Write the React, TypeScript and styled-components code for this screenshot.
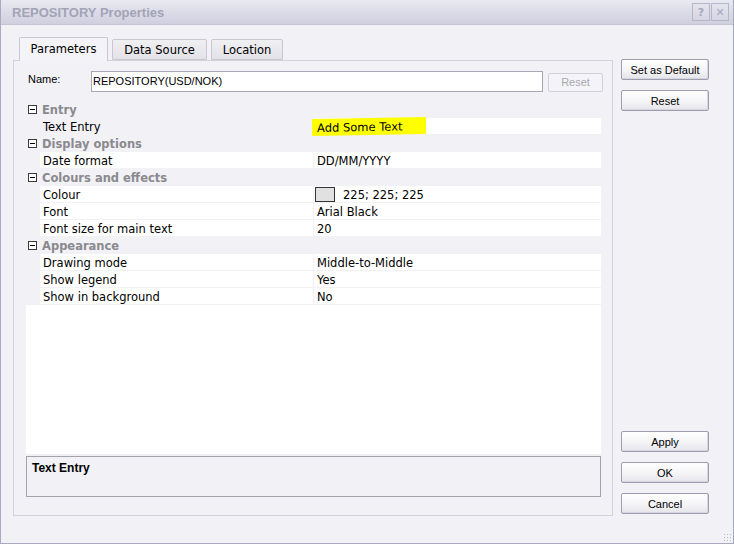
import React from "react";
import styled, { createGlobalStyle } from "styled-components";

const Global = createGlobalStyle`
  html, body { margin: 0; padding: 0; background: #f1f1f6; }
  * { box-sizing: border-box; }
`;

const Window = styled.div`
  width: 734px;
  height: 544px;
  border: 1px solid #a9a9c0;
  border-top: none;
  background: #f1f1f6;
  display: flex;
  flex-direction: column;
  position: relative;
  overflow: hidden;
`;

const TitleBar = styled.div`
  height: 25px;
  display: flex;
  align-items: center;
  padding: 0 4px 0 11px;
  background: linear-gradient(#e9e9f2, #cfcfdf);
  border-bottom: 1px solid #c4c4d4;
`;

const Title = styled.div`
  flex: 1;
  font-family: "Liberation Sans", Arial, sans-serif;
  font-weight: bold;
  font-size: 13px;
  color: #a3a3b6;
`;

const CaptionButton = styled.div`
  width: 18px;
  height: 18px;
  margin-left: 1px;
  border: 1px solid #b6b6c8;
  background: linear-gradient(#e4e4ee, #d6d6e4);
  color: #a6a6ba;
  font-family: "DejaVu Sans", sans-serif;
  font-weight: bold;
  font-size: 11px;
  display: flex;
  align-items: center;
  justify-content: center;
`;

const Body = styled.div`
  flex: 1;
  display: flex;
  padding: 12px 0 0 12px;
`;

const LeftCol = styled.div`
  width: 600px;
  display: flex;
  flex-direction: column;
`;

const TabStrip = styled.div`
  display: flex;
  align-items: flex-end;
  height: 23px;
  padding-left: 6px;
  gap: 4px;
  position: relative;
  z-index: 1;
`;

const Tab = styled.div<{ $active?: boolean; $w: number }>`
  width: ${(p) => p.$w}px;
  height: ${(p) => (p.$active ? 24 : 21)}px;
  margin-bottom: ${(p) => (p.$active ? -1 : 0)}px;
  border: 1px solid #c8c8d0;
  border-bottom: ${(p) => (p.$active ? "none" : "1px solid #c8c8d0")};
  background: ${(p) => (p.$active ? "#f4f4f8" : "linear-gradient(#f0f0f2, #e2e2e8)")};
  border-radius: 2px 2px 0 0;
  font-family: "DejaVu Sans", sans-serif;
  font-size: 11.5px;
  color: #000;
  display: flex;
  align-items: center;
  justify-content: center;
  padding-bottom: ${(p) => (p.$active ? 2 : 0)}px;
`;

const Panel = styled.div`
  height: 456px;
  border: 1px solid #d2d2da;
  padding: 10px 10px 0 12px;
  display: flex;
  flex-direction: column;
`;

const NameRow = styled.div`
  display: flex;
  align-items: center;
  height: 21px;
  padding-left: 2px;
`;

const Label = styled.div`
  width: 63px;
  flex-shrink: 0;
  font-family: "Liberation Sans", Arial, sans-serif;
  font-size: 11px;
  color: #000;
  align-self: flex-start;
  padding-top: 2px;
`;

const NameInput = styled.div`
  width: 452px;
  flex-shrink: 0;
  height: 21px;
  border: 1px solid #a8a8b4;
  background: #fff;
  font-family: "Liberation Sans", Arial, sans-serif;
  font-size: 11px;
  padding: 3px 0 0 1px;
  color: #000;
`;

const Btn = styled.div<{ $disabled?: boolean; $w?: number; $h?: number }>`
  width: ${(p) => p.$w ?? 88}px;
  height: ${(p) => p.$h ?? 21}px;
  flex-shrink: 0;
  border: 1px solid ${(p) => (p.$disabled ? "#d0d0d8" : "#9e9eb0")};
  border-radius: 2px;
  background: ${(p) =>
    p.$disabled ? "#f4f4f8" : "linear-gradient(#ffffff, #f3f3f6 60%, #e4e4ea)"};
  font-family: "Liberation Sans", Arial, sans-serif;
  font-size: 11px;
  color: ${(p) => (p.$disabled ? "#a8a8b0" : "#000")};
  display: flex;
  align-items: center;
  justify-content: center;
  box-shadow: ${(p) => (p.$disabled ? "none" : "inset -1px -1px 0 #d6d6de")};
`;

const SmallReset = styled(Btn)`
  margin-left: 5px;
  margin-top: 1px;
`;

const Grid = styled.div`
  margin-top: 9px;
  height: 353px;
  width: 575px;
  background: #fff;
  display: flex;
  flex-direction: column;
`;

const CatRow = styled.div`
  height: 17px;
  background: #f1f1f6;
  display: flex;
  align-items: center;
  font-family: "DejaVu Sans", sans-serif;
  font-weight: bold;
  font-size: 11.5px;
  color: #8a8a8e;
`;

const Toggle = styled.div`
  width: 9px;
  height: 9px;
  border: 1px solid #3a3a3a;
  margin: 0 5px 0 2px;
  position: relative;
  background: #fff;
  &::after {
    content: "";
    position: absolute;
    left: 1px;
    right: 1px;
    top: 3px;
    height: 1px;
    background: #000;
  }
`;

const PropRow = styled.div`
  height: 17px;
  display: flex;
  background: #f1f1f6;
  padding-left: 14px;
`;

const Cell = styled.div<{ $w?: number; $shade?: boolean }>`
  ${(p) => (p.$w ? `width: ${p.$w}px;` : "flex: 1;")}
  height: 16px;
  background: ${(p) => (p.$shade ? "#f1f1f6" : "#fff")};
  margin-right: ${(p) => (p.$w ? 1 : 0)}px;
  font-family: "DejaVu Sans", sans-serif;
  font-size: 11.5px;
  color: #000;
  display: flex;
  align-items: center;
  padding-left: 3px;
  padding-top: 1px;
  white-space: nowrap;
`;

const Highlight = styled.span`
  background: #ffff00;
  margin-left: -5px;
  padding: 2px 24px 1px 5px;
  border-radius: 1px;
  transform: skewY(-1deg);
`;

const Swatch = styled.span`
  width: 20px;
  height: 15px;
  border: 1px solid #333;
  background: #e1e1e1;
  margin: 0 8px 0 -2px;
`;

const Description = styled.div`
  margin-top: 2px;
  width: 575px;
  height: 41px;
  border: 1px solid #a3a3ac;
  background: #f1f1f6;
  padding: 4px 0 0 5px;
  font-family: "Liberation Sans", Arial, sans-serif;
  font-weight: bold;
  font-size: 12px;
  color: #000;
`;

const RightCol = styled.div`
  margin-left: 8px;
  padding-top: 22px;
  display: flex;
  flex-direction: column;
  gap: 10px;
`;

const Spacer = styled.div`
  flex: 0 0 300px;
`;

const Grip = styled.div`
  position: absolute;
  right: 2px;
  bottom: 2px;
  width: 8px;
  height: 8px;
  background-image: radial-gradient(circle, #b8b8c8 0.8px, transparent 1px);
  background-size: 3px 3px;
`;

type Row =
  | { kind: "cat"; label: string }
  | { kind: "prop"; label: string; value: React.ReactNode; selected?: boolean };

const rows: Row[] = [
  { kind: "cat", label: "Entry" },
  { kind: "prop", label: "Text Entry", value: <Highlight>Add Some Text</Highlight>, selected: true },
  { kind: "cat", label: "Display options" },
  { kind: "prop", label: "Date format", value: "DD/MM/YYYY" },
  { kind: "cat", label: "Colours and effects" },
  {
    kind: "prop",
    label: "Colour",
    value: (
      <>
        <Swatch />
        225; 225; 225
      </>
    ),
  },
  { kind: "prop", label: "Font", value: "Arial Black" },
  { kind: "prop", label: "Font size for main text", value: "20" },
  { kind: "cat", label: "Appearance" },
  { kind: "prop", label: "Drawing mode", value: "Middle-to-Middle" },
  { kind: "prop", label: "Show legend", value: "Yes" },
  { kind: "prop", label: "Show in background", value: "No" },
];

export default function App() {
  return (
    <>
      <Global />
      <Window>
        <TitleBar>
          <Title>REPOSITORY Properties</Title>
          <CaptionButton>?</CaptionButton>
          <CaptionButton>✕</CaptionButton>
        </TitleBar>
        <Body>
          <LeftCol>
            <TabStrip>
              <Tab $active $w={89}>Parameters</Tab>
              <Tab $w={95}>Data Source</Tab>
              <Tab $w={72}>Location</Tab>
            </TabStrip>
            <Panel>
              <NameRow>
                <Label>Name:</Label>
                <NameInput>REPOSITORY(USD/NOK)</NameInput>
                <SmallReset $disabled $w={55} $h={19}>
                  Reset
                </SmallReset>
              </NameRow>
              <Grid>
                {rows.map((r, i) =>
                  r.kind === "cat" ? (
                    <CatRow key={i}>
                      <Toggle />
                      {r.label}
                    </CatRow>
                  ) : (
                    <PropRow key={i}>
                      <Cell $w={273} $shade={r.selected}>
                        {r.label}
                      </Cell>
                      <Cell>{r.value}</Cell>
                    </PropRow>
                  )
                )}
              </Grid>
              <Description>Text Entry</Description>
            </Panel>
          </LeftCol>
          <RightCol>
            <Btn>Set as Default</Btn>
            <Btn>Reset</Btn>
            <Spacer />
            <Btn>Apply</Btn>
            <Btn>OK</Btn>
            <Btn>Cancel</Btn>
          </RightCol>
        </Body>
        <Grip />
      </Window>
    </>
  );
}
